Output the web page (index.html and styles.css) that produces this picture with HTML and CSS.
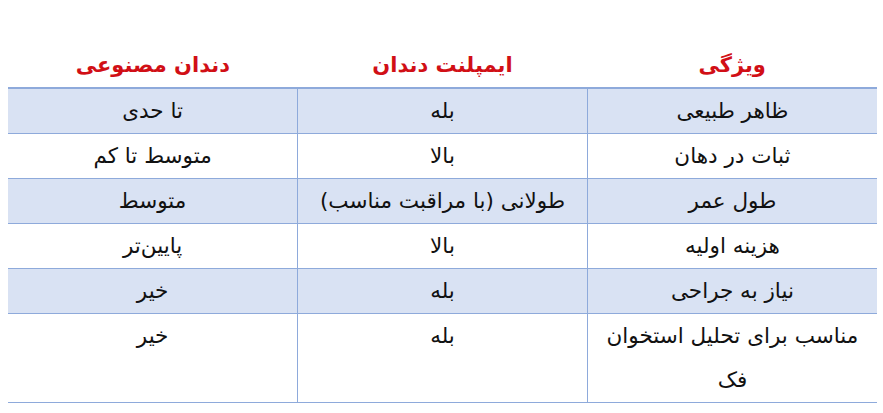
FILE: index.html
```html
<!DOCTYPE html>
<html lang="fa" dir="rtl">
<head>
<meta charset="utf-8">
<link rel="stylesheet" href="styles.css">
</head>
<body>
<div class="page">
<table class="compare">
  <thead>
    <tr><th>ویژگی</th><th>ایمپلنت دندان</th><th>دندان مصنوعی</th></tr>
  </thead>
  <tbody>
    <tr class="alt"><td>ظاهر طبیعی</td><td>بله</td><td>تا حدی</td></tr>
    <tr><td>ثبات در دهان</td><td>بالا</td><td>متوسط تا کم</td></tr>
    <tr class="alt"><td>طول عمر</td><td>طولانی (با مراقبت مناسب)</td><td>متوسط</td></tr>
    <tr><td>هزینه اولیه</td><td>بالا</td><td>پایین‌تر</td></tr>
    <tr class="alt"><td>نیاز به جراحی</td><td>بله</td><td>خیر</td></tr>
    <tr class="last"><td>مناسب برای تحلیل استخوان فک</td><td>بله</td><td>خیر</td></tr>
  </tbody>
</table>
</div>
</body>
</html>
```
FILE: styles.css
```css
html, body { margin: 0; padding: 0; background: #fff; }
.page { padding: 44px 6px 0 8px; }
.compare {
  width: 869px;
  border-collapse: collapse;
  table-layout: fixed;
  font-family: "DejaVu Sans", "Noto Sans", sans-serif;
  color: #111;
}
.compare th {
  color: #d10f16;
  font-weight: bold;
  font-size: 21px;
  line-height: 43px;
  height: 43px;
  padding: 0;
  text-align: center;
  border-bottom: 2px solid #8eaadb;
}
.compare td {
  font-size: 21.5px;
  line-height: 44px;
  padding: 0 14px;
  text-align: center;
  vertical-align: top;
  border-bottom: 1px solid #8eaadb;
  border-left: 1px solid #8eaadb;
}
.compare td:last-child { border-left: none; }
.compare tr.alt td { background: #d9e2f3; }
```
